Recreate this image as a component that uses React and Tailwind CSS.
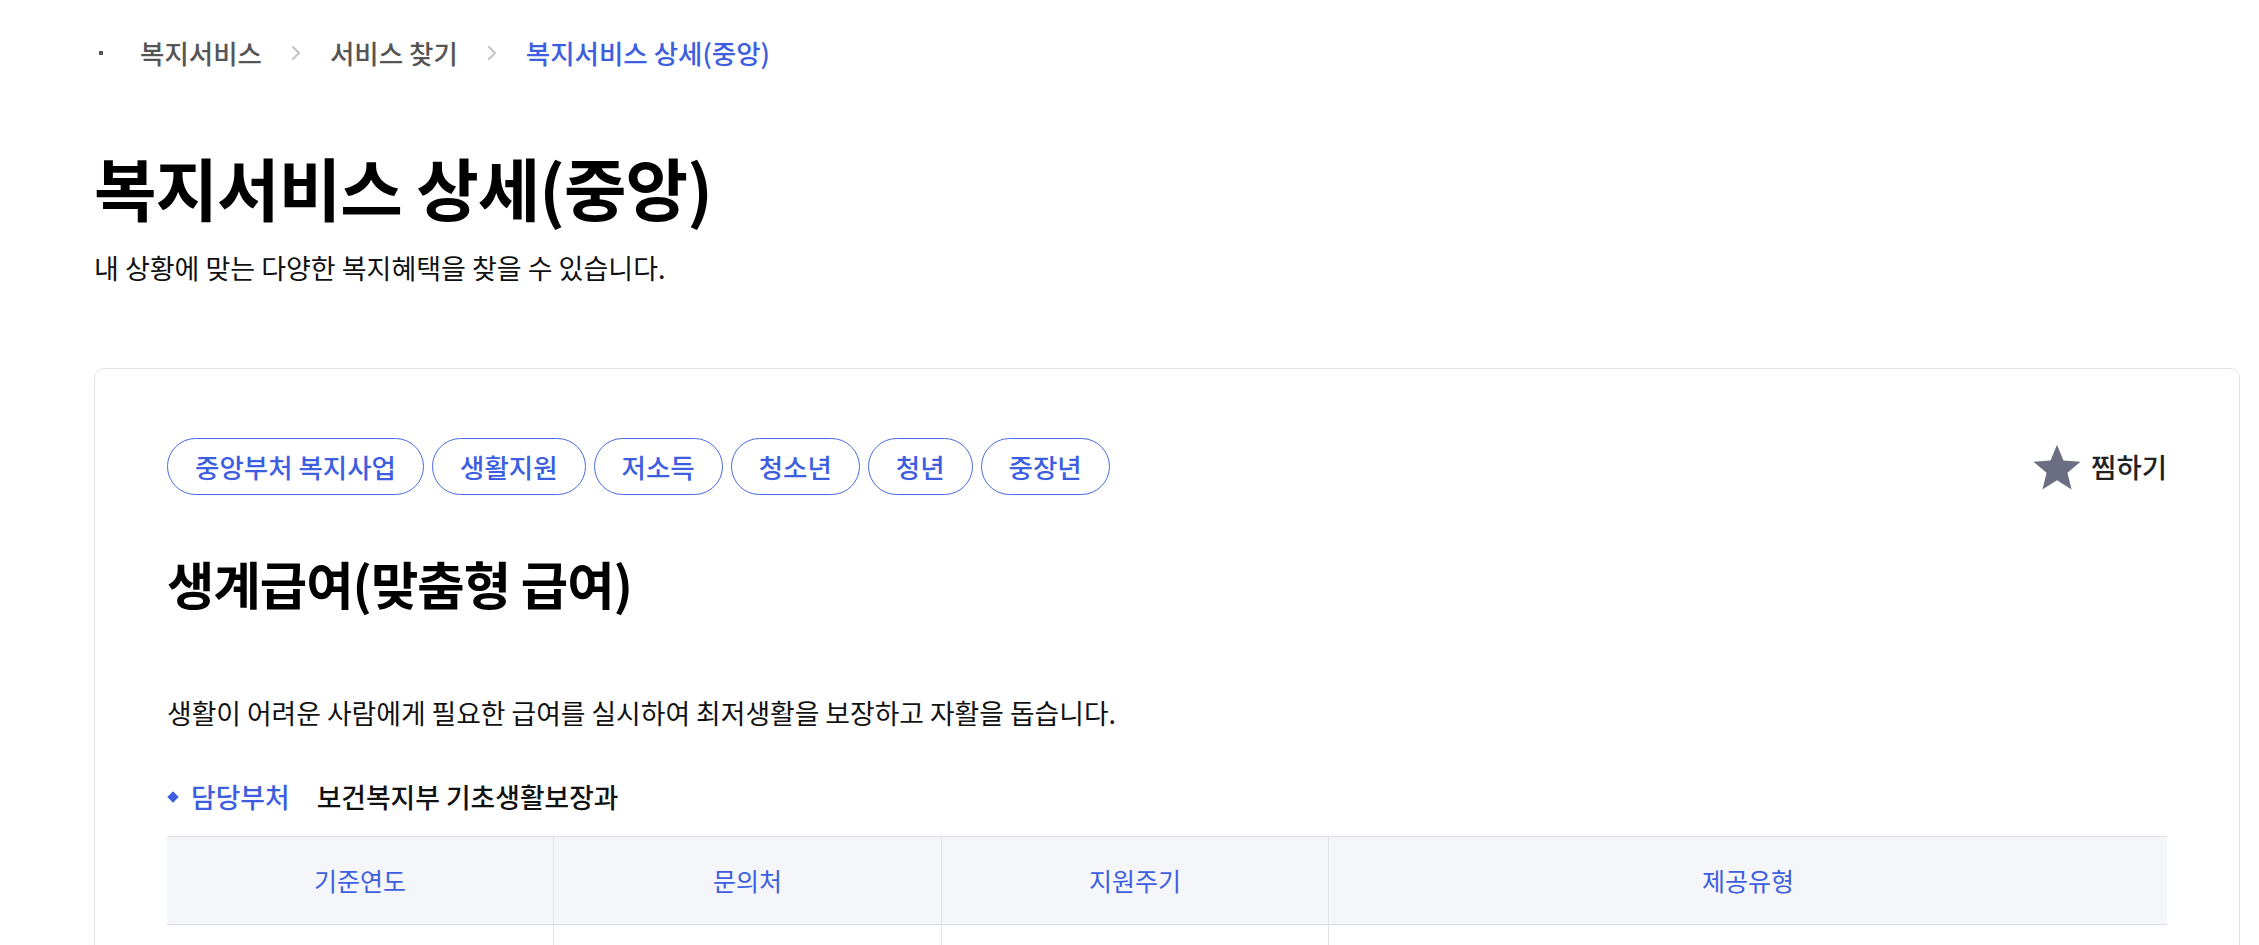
const FONT = { fontFamily: '"Noto Sans CJK KR", "Noto Sans", sans-serif' };

const TAGS = ['중앙부처 복지사업', '생활지원', '저소득', '청소년', '청년', '중장년'];

const COLUMNS = [
    { label: '기준연도', width: 'w-[386px]' },
    { label: '문의처', width: 'w-[388px]' },
    { label: '지원주기', width: 'w-[387px]' },
    { label: '제공유형', width: 'flex-1' },
];

function Chevron() {
    return (
        <svg width="10" height="16" viewBox="0 0 10 16" className="mx-[29px]">
            <path d="M2 2l6 6-6 6" fill="none" stroke="#c4c4c4" strokeWidth="2.2" strokeLinecap="round" strokeLinejoin="round" />
        </svg>
    );
}

function Star() {
    return (
        <svg width="50" height="48" viewBox="0 0 24 23">
            <path d="M12 0.8l3.1 7.6 8.2 0.6-6.3 5.3 2 8-7-4.4-7 4.4 2-8L0.7 9l8.2-0.6z" fill="#6b6e82" />
        </svg>
    );
}

export default function App() {
    return (
        <div className="min-h-[945px] w-full bg-white pl-[94px] text-[#111]" style={FONT}>
            {/* Breadcrumb */}
            <nav className="flex items-center pt-[35px] text-[26.5px] leading-[36px] font-medium">
                <span className="ml-[5px] h-[4px] w-[4px] bg-[#555]" />
                <span className="ml-[37px] text-[#555]">복지서비스</span>
                <Chevron />
                <span className="text-[#555]">서비스 찾기</span>
                <Chevron />
                <span className="text-[#3d5ee0]">복지서비스 상세(중앙)</span>
            </nav>

            {/* Heading */}
            <h1 className="mt-[72px] text-[68px] leading-[88px] font-bold tracking-[-1px] text-[#000]">
                복지서비스 상세(중앙)
            </h1>
            <p className="mt-[19px] text-[27px] leading-[36px] text-[#111]">
                내 상황에 맞는 다양한 복지혜택을 찾을 수 있습니다.
            </p>

            {/* Card */}
            <div className="mt-[82px] w-[2146px] rounded-[10px] border border-[#e3e3e3] px-[72px] pt-[69px] pb-[60px]">
                <div className="flex items-center justify-between">
                    <div className="flex gap-[8px]">
                        {TAGS.map((t) => (
                            <span key={t}
                                  className="flex h-[57px] items-center rounded-full border border-[#4a6be2] px-[27px] text-[26.5px] font-medium text-[#3d5ee0]">
                                {t}
                            </span>
                        ))}
                    </div>
                    <button className="flex items-center gap-[9px] text-[27.5px] font-medium text-[#222]">
                        <Star />
                        찜하기
                    </button>
                </div>

                <h2 className="mt-[57px] text-[51.5px] leading-[62px] font-bold tracking-[-1px] text-[#000]">
                    생계급여(맞춤형 급여)
                </h2>

                <p className="mt-[81px] text-[26.8px] leading-[36px] text-[#111]">
                    생활이 어려운 사람에게 필요한 급여를 실시하여 최저생활을 보장하고 자활을 돕습니다.
                </p>

                <div className="mt-[48px] flex items-center text-[26.8px] leading-[36px] font-medium">
                    <span className="ml-[2px] h-[8px] w-[8px] rotate-45 bg-[#3d5ee0]" />
                    <span className="ml-[14px] text-[#3d5ee0]">담당부처</span>
                    <span className="ml-[27px] text-[#111]">보건복지부 기초생활보장과</span>
                </div>

                {/* Table */}
                <div className="mt-[21px] border-t border-[#dcdce1] text-[25px]">
                    <div className="flex h-[88px] border-b border-[#dcdce1] bg-[#f5f6fa]">
                        {COLUMNS.map((c, i) => (
                            <div key={c.label}
                                 className={`${c.width} flex items-center justify-center text-[#3d5ee0] ${i > 0 ? 'border-l border-[#e3e4e8]' : ''}`}>
                                {c.label}
                            </div>
                        ))}
                    </div>
                    <div className="flex h-[88px] border-b border-[#dcdce1]">
                        {COLUMNS.map((c, i) => (
                            <div key={c.label}
                                 className={`${c.width} ${i > 0 ? 'border-l border-[#e3e4e8]' : ''}`} />
                        ))}
                    </div>
                </div>
            </div>
        </div>
    );
}
